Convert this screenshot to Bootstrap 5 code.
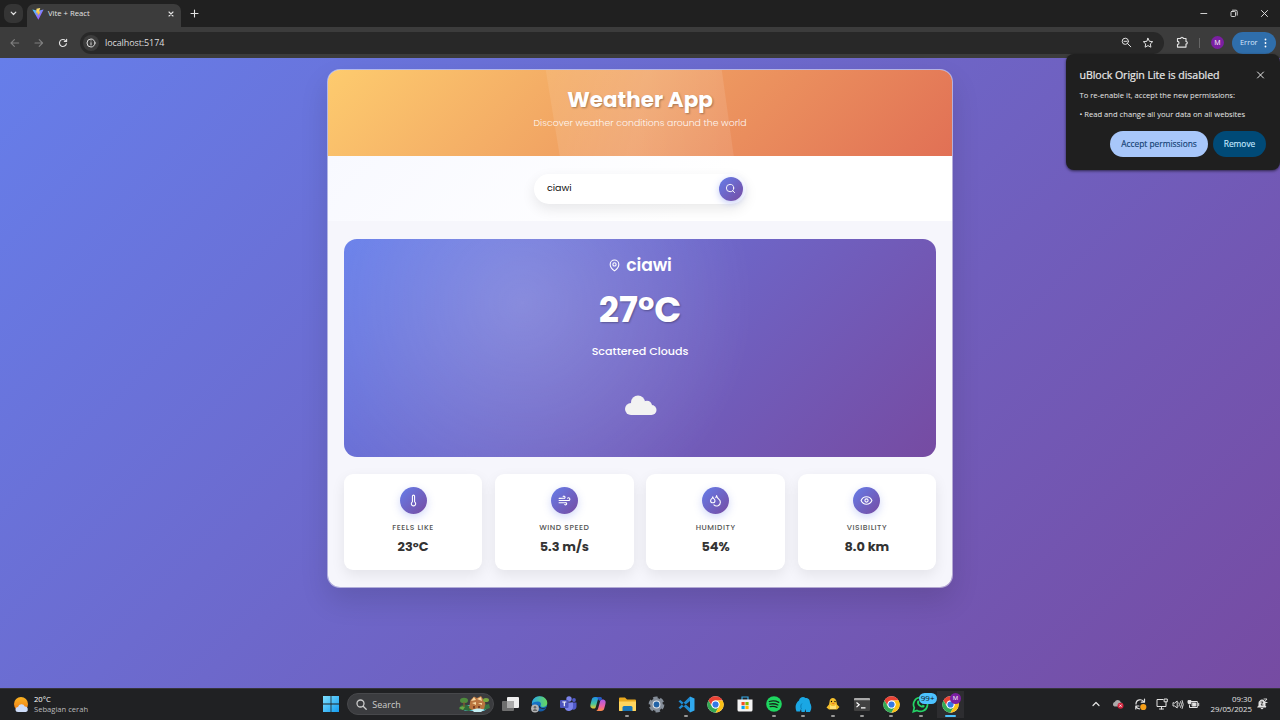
<!DOCTYPE html>
<html lang="en">
<head>
<meta charset="utf-8">
<title>Vite + React</title>
<meta name="viewport" content="width=device-width, initial-scale=1">
<link rel="stylesheet" href="https://cdn.jsdelivr.net/npm/bootstrap@5.3.0/dist/css/bootstrap.min.css">
<style>
:root{--grad:linear-gradient(135deg,#667eea 0%,#764ba2 100%)}
body{height:720px;width:1280px;overflow:hidden;font-family:"Open Sans","Noto Sans",sans-serif;font-size:8px;line-height:1;background:#202020;color:#e3e3e3;white-space:nowrap}
svg{display:block;flex:none}
.ln{fill:none;stroke:currentColor;stroke-linecap:round;stroke-linejoin:round}
/* browser chrome */
.tabstrip{height:27px;background:#202020}
.tabmenu{width:19px;height:19px;border-radius:7px;background:#353535;margin-left:4px}
.tab-active{width:154px;height:23px;margin:4px 0 0 4px;padding:0 6px 3px 5px;background:#3c3c3c;border-radius:7px 7px 0 0}
.tab-title{font-size:7.7px}
.winctl{gap:21px;padding-right:10px}
.toolbar{height:31px;background:#3c3c3c;padding:0 4px 0 9px}
.omni{width:1084px;height:22px;border-radius:11px;background:#282828;margin-left:11px;padding:0 10px 0 3px}
.siteinfo{width:16px;height:16px;border-radius:50%;background:#3c3c3c}
.url{font-size:9px;margin-left:6px;color:#ddd;letter-spacing:-.1px}
.avatar-m{width:13px;height:13px;border-radius:50%;background:#7b1fa2;font-size:7px;color:#fff}
.err{width:44px;height:22px;border-radius:11px;background:#2f6eab;color:#d7e8ff;font-size:7.4px;padding:0 9px 0 8px}
/* page */
.viewport-bg{height:630px;background:var(--grad);padding-top:11px}
.pop{font-family:Poppins,Inter,"Liberation Sans",sans-serif}
.app{width:626.500px;height:518.500px;border-radius:13px;border:1px solid rgba(255,255,255,.5);background:#f6f6fc;background-clip:padding-box;box-shadow:0 13px 28px rgba(0,0,0,.12);overflow:hidden}
.hero{height:86px;background:linear-gradient(135deg,#fdcb6e,#e17055);padding-top:16.500px;color:#fff}
.shine{inset:0;background:linear-gradient(100deg,rgba(255,255,255,.08) 34%,rgba(255,255,255,.16) 50%,rgba(255,255,255,.09) 66%);clip-path:polygon(218px 0,394px 0,406px 86px,232px 86px)}
.hero h1{font-size:21.500px;line-height:26px;font-weight:700;text-shadow:1px 1px 2px rgba(0,0,0,.3)}
.hero p{font-size:9.350px;line-height:14px;margin-top:3px;font-weight:300;opacity:.9}
.findbar{height:65px;background:linear-gradient(135deg,#f8f9ff,#fff 60%);padding-top:18px}
.pill{width:212px;height:30px;border-radius:15px;background:#fff;box-shadow:0 5px 14px rgba(0,0,0,.09);padding:0 3px 2px 13px;color:#111;font-size:9.500px}
.gobtn{width:24px;height:24px;border-radius:50%;background:var(--grad);color:#fff;box-shadow:0 2px 7px rgba(102,126,234,.4);margin-top:2px;padding:0 1px 1px 0}
.now{height:218px;border-radius:13px;margin:18px 16px 0;background:radial-gradient(circle 230px at 178px 64px,rgba(255,255,255,.2),rgba(255,255,255,0)),var(--grad);color:#fff;padding-top:15px}
.city{font-size:17.200px;line-height:22px;font-weight:600;letter-spacing:-.1px}
.temp{font-size:35.400px;line-height:44px;font-weight:700;margin-top:12px;text-shadow:1px 1px 2px rgba(0,0,0,.3)}
.desc{font-size:11.100px;line-height:16px;font-weight:500;margin-top:11px}
.stats{gap:12.600px;margin:17px 16px 0}
.stat{height:96px;border-radius:9px;background:#fff;box-shadow:0 5px 14px rgba(0,0,0,.08);padding-top:13px;color:#333}
.orb{width:27px;height:27px;border-radius:50%;background:var(--grad);color:#fff;box-shadow:0 3px 8px rgba(102,126,234,.3)}
.lab{font-size:7.600px;line-height:10px;font-weight:500;color:#555;letter-spacing:.55px;margin-top:8.500px}
.val{font-size:12.900px;line-height:17px;font-weight:700;margin-top:5.500px}
/* extension popup */
.extpop{top:54px;right:0;width:214px;height:116px;border-radius:8px;background:#1f1f1f;box-shadow:0 1px 3px rgba(0,0,0,.6);padding:14px 15px 0 13.500px;color:#e8e8e8}
.extpop h2{font-size:10.600px;line-height:15px;font-weight:500;letter-spacing:-.05px;-webkit-text-stroke:.2px}
.extpop .txt{font-size:7.600px;line-height:11px}
.extbtn{height:26px;border-radius:13px;font-size:8.400px;font-weight:500;-webkit-text-stroke:.15px}
/* taskbar */
.taskbar{height:32px;background:#202123;border-top:1px solid #36343c;padding-bottom:1px}
.widget{width:316px;padding-left:13px;font-size:7.600px}
.tb{width:29.350px;height:31px;position:relative}
.tb::after{content:"";position:absolute;bottom:3px;width:4px;height:2px;border-radius:1px;background:transparent}
.tb.run::after{background:#999}
.tb.on::after{background:#4cc2ff;width:11px}
.tb.on{background:linear-gradient(#2d2d30,#2d2d30) center/27px 27px no-repeat}
.searchbox{width:147px;height:22px;border-radius:11px;background:#3b3c3f;border:1px solid #47484b;margin:0 1px 0 2px;padding:0 3px 0 8px;color:#ccc;font-size:9px}
.cnt{top:4px;right:-1px;height:11px;border-radius:6px;background:#4cc2ff;color:#111;font-size:8px;padding:1.500px 2px 0;z-index:1}
.mbadge{top:4px;right:4px;width:11px;height:11px;border-radius:50%;background:#7b1fa2;color:#fff;font-size:6px}
.clock{font-size:7.800px;line-height:10.500px;width:52px}
</style>
</head>
<body class="d-flex flex-column position-relative">
<svg width="0" height="0" class="position-absolute"><defs>
<symbol id="chrome" viewBox="0 0 48 48"><circle cx="24" cy="24" r="23" fill="#fff"/><path d="M4 12.500A23 23 0 0 1 44 12.500H24A11.500 11.500 0 0 0 14 29.800z" fill="#ea4335"/><path d="M4 12.500A23 23 0 0 0 24 47L34 29.800A11.500 11.500 0 0 1 14 29.800z" fill="#34a853"/><path d="M44 12.500A23 23 0 0 1 24 47L34 29.800A11.500 11.500 0 0 0 24 12.500z" fill="#fbc116"/><circle cx="24" cy="24" r="11" fill="#fff"/><circle cx="24" cy="24" r="8.700" fill="#3478e5"/></symbol>
</defs></svg>

<header class="tabstrip d-flex align-items-center flex-shrink-0">
  <div class="tabmenu d-flex align-items-center justify-content-center"><svg class="ln" width="7" height="5" viewBox="0 0 7 5" stroke-width="1.200"><path d="M1.200 1.200 3.500 3.500 5.800 1.200"/></svg></div>
  <div class="tab-active d-flex align-items-center">
    <svg width="12" height="12" viewBox="0 0 32 32"><defs><linearGradient id="va" x2="1" y2="1"><stop stop-color="#41d1ff"/><stop offset="1" stop-color="#bd34fe"/></linearGradient><linearGradient id="vb" x2="0" y2="1"><stop stop-color="#ffea83"/><stop offset="1" stop-color="#ffa800"/></linearGradient></defs><path d="M31 4 17 31 1 4l15 3z" fill="url(#va)"/><path d="M22 0 12 2l-.7 11 4-1-1 5 3-.8-.8 5 6-12-4 .8z" fill="url(#vb)"/></svg>
    <span class="tab-title ms-1">Vite + React</span>
    <svg class="ln ms-auto" width="8" height="8" viewBox="0 0 8 8" stroke-width="1.100"><path d="m2 2 4 4M6 2 2 6"/></svg>
  </div>
  <svg class="ln" style="margin-left:9px" width="9" height="9" viewBox="0 0 9 9" stroke-width="1.100"><path d="M4.500 1v7M1 4.500h7"/></svg>
  <div class="winctl d-flex align-items-center ms-auto">
    <svg class="ln" width="9" height="9" viewBox="0 0 9 9" stroke-width=".9"><path d="M.8 4.500h6"/></svg>
    <svg class="ln" width="9" height="9" viewBox="0 0 9 9" stroke-width=".9"><rect x="1" y="2.500" width="4.500" height="5" rx=".8"/><path d="M2.500 1.200H6a1.200 1.200 0 0 1 1.200 1.200v3.800"/></svg>
    <svg class="ln" width="10" height="9" viewBox="0 0 10 9" stroke-width=".95"><path d="m1.500 1.500 6 6m0-6-6 6"/></svg>
  </div>
</header>

<div class="toolbar d-flex align-items-center flex-shrink-0">
  <svg class="ln" style="color:#7f7f7f" width="12" height="12" viewBox="0 0 12 12" stroke-width="1.100"><path d="M9.700 6H2.200M5.400 2.600 2 6l3.400 3.400"/></svg>
  <svg class="ln" style="color:#7f7f7f;margin-left:12px" width="12" height="12" viewBox="0 0 12 12" stroke-width="1.100"><path d="M2 6h7.500M6.200 2.600 9.600 6 6.200 9.400"/></svg>
  <svg class="ln" style="margin-left:12px" width="12" height="12" viewBox="0 0 12 12" stroke-width="1.150"><path d="M9.400 6.700A3.500 3.500 0 1 1 8.500 3.600l.9.800M9.600 2.200v2.300H7.300"/></svg>
  <div class="omni d-flex align-items-center">
    <div class="siteinfo d-flex align-items-center justify-content-center"><svg class="ln" width="10" height="10" viewBox="0 0 10 10" stroke-width=".95"><circle cx="5" cy="5" r="4"/><path d="M5 4.700v2.300M5 2.900v.1"/></svg></div>
    <span class="url">localhost:5174</span>
    <svg class="ln ms-auto" width="11" height="11" viewBox="0 0 11 11" stroke-width="1"><circle cx="4.300" cy="4.300" r="3.100"/><path d="m6.600 6.600 3.200 3.200M3 4.300h2.600"/></svg>
    <svg class="ln" style="margin-left:10px" width="12" height="12" viewBox="0 0 12 12" stroke-width="1"><path d="m6 1.300 1.400 3 3.300.4-2.400 2.200.6 3.300L6 8.600l-2.900 1.600.6-3.300L1.300 4.700l3.300-.4z"/></svg>
  </div>
  <svg class="ln" style="margin-left:12px" width="13" height="13" viewBox="0 0 13 13" stroke-width="1.150"><path d="M1.500 2.500h3.200a1.300 1.300 0 0 1 2.600 0h2.700v3a1.300 1.300 0 0 1 0 2.600v3H1.500V8.400a1.500 1.500 0 0 0 0-3z"/></svg>
  <span style="width:1px;height:10px;background:#666;margin-left:10px"></span>
  <span class="avatar-m d-flex align-items-center justify-content-center" style="margin-left:11px">M</span>
  <span class="err d-flex align-items-center justify-content-between ms-auto"><span>Error</span><svg width="3" height="10" viewBox="0 0 3 10" fill="#fff"><circle cx="1.500" cy="1.500" r=".9"/><circle cx="1.500" cy="5" r=".9"/><circle cx="1.500" cy="8.500" r=".9"/></svg></span>
</div>

<main class="viewport-bg pop flex-shrink-0">
  <div class="app mx-auto">
    <div class="hero position-relative text-center">
      <div class="shine position-absolute"></div>
      <h1 class="m-0 position-relative">Weather App</h1>
      <p class="mb-0 position-relative">Discover weather conditions around the world</p>
    </div>
    <div class="findbar">
      <div class="pill mx-auto d-flex align-items-center justify-content-between"><span>ciawi</span>
        <span class="gobtn d-flex align-items-center justify-content-center"><svg class="ln" width="11" height="11" viewBox="0 0 24 24" stroke-width="2"><circle cx="11" cy="11" r="8"/><path d="m21 21-4.300-4.300"/></svg></span></div>
    </div>
    <div class="now d-flex flex-column align-items-center">
      <div class="city d-flex align-items-center"><svg class="ln" style="margin-right:5px" width="13" height="13" viewBox="0 0 24 24" stroke-width="2"><path d="M20 10c0 6-8 12-8 12s-8-6-8-12a8 8 0 0 1 16 0Z"/><circle cx="12" cy="10" r="3"/></svg><span>ciawi</span></div>
      <div class="temp">27°C</div>
      <div class="desc">Scattered Clouds</div>
      <svg style="margin:36px 0 0 1px" width="32" height="21" viewBox="0 0 32 21" fill="#f2f2f2"><circle cx="6" cy="14" r="6"/><circle cx="13" cy="7.500" r="7"/><circle cx="22" cy="10.500" r="4.800"/><circle cx="26.500" cy="15" r="5"/><rect x="6" y="9" width="20.500" height="11"/></svg>
    </div>
    <div class="stats d-flex">
      <div class="stat flex-fill w-25 d-flex flex-column align-items-center"><span class="orb d-flex align-items-center justify-content-center"><svg class="ln" width="13" height="13" viewBox="0 0 24 24" stroke-width="2"><path d="M14 4v10.500a4 4 0 1 1-4 0V4a2 2 0 0 1 4 0Z"/></svg></span><span class="lab">FEELS LIKE</span><span class="val">23°C</span></div>
      <div class="stat flex-fill w-25 d-flex flex-column align-items-center"><span class="orb d-flex align-items-center justify-content-center"><svg class="ln" width="13" height="13" viewBox="0 0 24 24" stroke-width="2"><path d="M17.700 7.700a2.500 2.500 0 1 1 1.800 4.300H2M9.600 4.600A2 2 0 1 1 11 8H2M12.600 19.400A2 2 0 1 0 14 16H2"/></svg></span><span class="lab">WIND SPEED</span><span class="val">5.3 m/s</span></div>
      <div class="stat flex-fill w-25 d-flex flex-column align-items-center"><span class="orb d-flex align-items-center justify-content-center"><svg class="ln" width="13" height="13" viewBox="0 0 24 24" stroke-width="2"><path d="M7 16.300c2.200 0 4-1.830 4-4.050 0-1.160-.57-2.260-1.710-3.190S7.290 6.750 7 5.300c-.29 1.450-1.140 2.840-2.290 3.760S3 11.100 3 12.250c0 2.220 1.800 4.050 4 4.050z"/><path d="M12.560 6.600A10.970 10.970 0 0 0 14 3.020c.5 2.500 2 4.900 4 6.500s3 3.500 3 5.500a6.980 6.980 0 0 1-11.910 4.970"/></svg></span><span class="lab">HUMIDITY</span><span class="val">54%</span></div>
      <div class="stat flex-fill w-25 d-flex flex-column align-items-center"><span class="orb d-flex align-items-center justify-content-center"><svg class="ln" width="13" height="13" viewBox="0 0 24 24" stroke-width="2"><path d="M2 12s3-7 10-7 10 7 10 7-3 7-10 7-10-7-10-7Z"/><circle cx="12" cy="12" r="3"/></svg></span><span class="lab">VISIBILITY</span><span class="val">8.0 km</span></div>
    </div>
  </div>
</main>

<footer class="taskbar d-flex align-items-center flex-shrink-0">
  <div class="widget d-flex align-items-center">
    <svg width="17" height="17" viewBox="0 0 17 17"><defs><linearGradient id="sun" x2="0" y2="1"><stop stop-color="#fbb321"/><stop offset="1" stop-color="#ee7b18"/></linearGradient></defs><circle cx="8" cy="8" r="7" fill="url(#sun)"/><path d="M5 16a2.500 2.500 0 0 1 0-5 3.600 3.600 0 0 1 6.800-.6A2.900 2.900 0 0 1 13 16z" fill="#cddcf8"/></svg>
    <div style="margin-left:4px;line-height:10.500px"><div class="text-white">20°C</div><div style="color:#bbb">Sebagian cerah</div></div>
  </div>
  <div class="tb d-flex align-items-center justify-content-center"><svg width="16" height="16" viewBox="0 0 16 16"><defs><linearGradient id="wn" x2="1" y2="1"><stop stop-color="#7fe0ff"/><stop offset="1" stop-color="#139cf0"/></linearGradient></defs><path fill="url(#wn)" d="M0 0h7.600v7.600H0zM8.400 0H16v7.600H8.400zM0 8.400h7.600V16H0zM8.400 8.400H16V16H8.400z"/></svg></div>
  <div class="searchbox d-flex align-items-center">
    <svg class="ln" width="11" height="11" viewBox="0 0 11 11" stroke-width="1.300"><circle cx="4.500" cy="4.500" r="3.500"/><path d="m7.200 7.200 3 3"/></svg><span style="margin-left:5px">Search</span>
    <svg class="ms-auto" width="31" height="18" viewBox="0 0 31 18"><path d="M1 12c5-3 23-3 29 0l-5 4H6z" fill="#4fb9cf"/><path d="M0 14.500c1-5 5-6.500 10-3.500l5 3-5 2z" fill="#2f6a39"/><path d="M0 13q3-3 6-1l-2 3z" fill="#69a847"/><ellipse cx="5" cy="5.500" rx="4" ry="2.700" fill="#4e8b3d"/><path d="M5 7v5" stroke="#8a5a33" stroke-width="1.200"/><path d="m10 13 1.500-8L15 1.500l3 1.500 4-2 4 6 1 6-5 2h-9z" fill="#b9743f"/><path d="m12 6 3-4 2 3zM18 4l4-2 1 4zM13 8l4-1v3zM19 8h4v2z" fill="#f6d6a0"/><path d="M14 11h2v2.500h-2zM19 11h2v2.500h-2z" fill="#7a3e22"/><path d="M13 15c4-2 9-2 12 0l-3 2h-7z" fill="#c4eef2"/><ellipse cx="27" cy="5" rx="3" ry="2" fill="#79a93f"/><path d="m25 15 1-5 4-1 1 4z" fill="#397542"/></svg>
  </div>
  <div class="tb d-flex align-items-center justify-content-center"><svg width="17" height="15" viewBox="0 0 17 15"><rect x="5" width="12" height="11" rx="1" fill="#eee"/><rect y="4" width="12" height="10" rx="1" fill="#777" opacity=".9"/><path d="M5 4h7v7H5z" fill="#aaa"/></svg></div>
  <div class="tb d-flex align-items-center justify-content-center"><svg width="17" height="17" viewBox="0 0 17 17"><defs><linearGradient id="eg" x2="1"><stop stop-color="#2aa8e8"/><stop offset="1" stop-color="#67d95b"/></linearGradient></defs><circle cx="8.500" cy="8" r="7.700" fill="#1571c4"/><path d="M.8 8C1 3 5 .3 8.500.3c5 0 7.800 3.500 7.800 6.700 0 2.500-2 4-4.500 4-2 0-2.800-1-2-2 .7-1.200-.2-3.400-3-3.400C3.500 5.600 1.500 7 .8 8" fill="url(#eg)"/><path d="M8.500 8.500c-.5 3.500 4 4.500 7.200 2.800L17 13l-5 4H7z" fill="#202123"/><path d="M7 8c0 5 5 5.500 8.500 3.800-1.200 2.300-3.500 3.700-6 3.700-4-.5-5-5-2.500-7.500" fill="#155ca8"/><circle cx="4" cy="12.500" r="3.900" fill="#b4b4b4"/><circle cx="4" cy="11.300" r="1.300" fill="#666"/><path d="M1.800 15c.3-2.700 4.100-2.700 4.400 0" fill="#666"/></svg></div>
  <div class="tb d-flex align-items-center justify-content-center"><svg width="17" height="16" viewBox="0 0 17 16"><circle cx="9" cy="3" r="2.700" fill="#7b83eb"/><circle cx="14" cy="4" r="1.900" fill="#5059c9"/><path d="M11 6.500h5.500V11a3 3 0 0 1-5 2z" fill="#5059c9"/><path d="M5 6.500h8V11a4.200 4.200 0 0 1-8.200 1z" fill="#7b83eb"/><rect y="4" width="8.500" height="8" rx="1" fill="#4b53bc"/><path d="M2.300 6h4M4.300 6v4.200" stroke="#fff" stroke-width="1.100"/></svg></div>
  <div class="tb d-flex align-items-center justify-content-center"><svg width="16" height="16" viewBox="0 0 16 16"><defs><linearGradient id="c1" x2="0" y2="1"><stop stop-color="#1d8fe8"/><stop offset=".6" stop-color="#47c59b"/><stop offset="1" stop-color="#edc52a"/></linearGradient><linearGradient id="c2" x2="0" y2="1"><stop stop-color="#a95be8"/><stop offset=".6" stop-color="#ee62a4"/><stop offset="1" stop-color="#fb8c45"/></linearGradient></defs><path d="M5 1h5c-1.700.6-2 2-2.400 3.500L5.800 11c-.3 1-1 1.500-2 1.500C0 12.500 0 10 .7 7.500l1-3.700C2.200 2 3 1 5 1" fill="url(#c1)"/><path d="M11 15H6c1.700-.6 2-2 2.400-3.500L10.200 5c.3-1 1-1.500 2-1.500 3.800 0 3.800 2.500 3.100 5l-1 3.700C13.800 14 13 15 11 15" fill="url(#c2)"/><path d="M6 1h4.500c1 0 1.400.8 1.700 2.500-1.200 0-1.800.5-2 1.500L8.500 4C8 2 7 1 6 1" fill="#265bc5"/></svg></div>
  <div class="tb run d-flex align-items-center justify-content-center"><svg width="17" height="15" viewBox="0 0 17 15"><path d="M0 1.500Q0 .5 1 .5h5l2 2h8q1 0 1 1V14H0z" fill="#eaa91e"/><path d="M0 4.500h17V13q0 1-1 1H1q-1 0-1-1z" fill="#ffd55e"/><path d="M3.500 14V10.500q0-1.500 1.500-1.500h7q1.500 0 1.500 1.500V14z" fill="#1976b8"/></svg></div>
  <div class="tb d-flex align-items-center justify-content-center"><svg width="17" height="17" viewBox="0 0 17 17"><circle cx="8.500" cy="8.500" r="6.400" fill="#858e99"/><circle cx="8.500" cy="8.500" r="6.600" fill="none" stroke="#858e99" stroke-width="2.600" stroke-dasharray="4.400 2.510"/><circle cx="8.500" cy="8.500" r="3.900" fill="#e3e8ed"/><circle cx="8.500" cy="8.500" r="2.900" fill="#2062a6"/></svg></div>
  <div class="tb run d-flex align-items-center justify-content-center"><svg width="17" height="17" viewBox="0 0 17 17"><path d="M12 .5 16.500 2.500v12L12 16.500z" fill="#30a9ee"/><path d="M12 5 2.300 13 .5 11.700 12 .5zM12 12 2.300 4 .5 5.300 12 16.500z" fill="#1f8ad2"/></svg></div>
  <div class="tb d-flex align-items-center justify-content-center"><svg width="17" height="17"><use href="#chrome"/></svg></div>
  <div class="tb d-flex align-items-center justify-content-center"><svg width="16" height="16" viewBox="0 0 16 16"><path d="M5 4V1h6v3" fill="none" stroke="#35a9e8" stroke-width="1.200"/><path d="M.5 3.500h15V14q0 1.500-1.500 1.500H2Q.5 15.500.5 14z" fill="#f3f3f3"/><path d="M4.500 6h3.200v3.200H4.500z" fill="#f25022"/><path d="M8.400 6h3.200v3.200H8.400z" fill="#7fba00"/><path d="M4.500 9.900h3.200v3.200H4.500z" fill="#00a4ef"/><path d="M8.400 9.900h3.200v3.200H8.400z" fill="#ffb900"/></svg></div>
  <div class="tb run d-flex align-items-center justify-content-center"><svg width="16" height="16" viewBox="0 0 16 16"><circle cx="8" cy="8" r="7.800" fill="#1ed760"/><path d="M3.300 5.500q5-1.500 9.500.8M3.700 8.200q4.300-1.200 8.200.8M4.200 10.700q3.700-1 6.800.7" fill="none" stroke="#17251b" stroke-width="1.300" stroke-linecap="round"/></svg></div>
  <div class="tb run d-flex align-items-center justify-content-center"><svg width="17" height="17" viewBox="0 0 17 17"><path d="M1.500 15.500C-.3 11 .5 7 4 4.500 4.500 1 8.500 0 10.500 2c3.500-.2 4.500 2.500 4.500 5 2 3 1.500 6.500 0 9h-4l-.3-3-1 3H6.500L6 13l-1 2.500z" fill="#1aa7e4"/><path d="M6.500 13c-1-2-1-4 .5-5.500" stroke="#0872a9" fill="none" stroke-width=".8"/></svg></div>
  <div class="tb run d-flex align-items-center justify-content-center"><svg width="14" height="14" viewBox="0 0 14 14"><path d="M3.500 5c0-5.500 6.500-5.500 7 0l.5 2.500L13.500 10 11 12.500H3L.5 10.500l2.500-3z" fill="#f4bf2d"/><path d="M4 7.500c1 2 5 2 6 0V12H4z" fill="#ffe174"/><circle cx="5.500" cy="4.500" r=".7"/><circle cx="9" cy="4.500" r=".7"/><path d="m5.500 6 1.800 1.300L9 6z" fill="#eb6925"/></svg></div>
  <div class="tb run d-flex align-items-center justify-content-center"><svg width="16" height="13" viewBox="0 0 16 13"><rect width="16" height="13" rx="1" fill="#414141"/><path d="M0 1q0-1 1-1h14q1 0 1 1v1.200H0z" fill="#aaa"/><path d="m2.500 4.500 2.700 2.300-2.700 2.300M7 9.800h4.500" stroke="#fff" fill="none" stroke-width="1.200"/></svg></div>
  <div class="tb run d-flex align-items-center justify-content-center"><svg width="17" height="17"><use href="#chrome"/></svg></div>
  <div class="tb run d-flex align-items-center justify-content-center"><svg width="17" height="17" viewBox="0 0 17 17"><path d="m1.300 15.700 1-4A7 7 0 1 1 5 14.500z" fill="#202123" stroke="#24d366" stroke-width="1.700"/><path d="M5.300 5c1-1.500 1.500-.5 2.100 1l-.6 1c.8 1.500 1.700 2.200 3 2.700l1-1 2 1c-.3 2-2.300 2.200-4.300 1.300-2.400-1.100-4.200-3.500-3.200-6" fill="#24d366"/></svg><span class="cnt position-absolute">99+</span></div>
  <div class="tb on d-flex align-items-center justify-content-center"><svg width="17" height="17"><use href="#chrome"/></svg><span class="mbadge position-absolute d-flex align-items-center justify-content-center">M</span></div>
  <div class="d-flex align-items-center ms-auto" style="padding-right:12px">
    <svg class="ln" width="8" height="6" viewBox="0 0 8 6" stroke-width="1.200"><path d="m1 4.500 3-3 3 3"/></svg>
    <svg style="margin-left:12px" width="12" height="10" viewBox="0 0 12 10"><path d="M2.500 7.500a2.300 2.300 0 0 1 .2-4.400 3.300 3.300 0 0 1 6.200.4c2 .2 2 3 1 4z" fill="#aaa"/><circle cx="8.500" cy="6.700" r="3" fill="#d3233c"/><path d="m7.400 5.600 2.200 2.200m0-2.200L7.400 7.800" stroke="#fff" stroke-width=".8"/></svg>
    <svg class="ln" style="margin-left:10px" width="13" height="13" viewBox="0 0 13 13" stroke-width="1.200"><path d="M2 6a4.200 4.200 0 0 1 8-1.800M10.500 1v3.200H7.300M1.800 11V8H5M2 8.500c.8 1.500 2 2.300 3.500 2.300"/><circle cx="9.300" cy="9" r="3.100" fill="#f7a018" stroke="none"/></svg>
    <svg class="ln" style="margin-left:9px" width="12" height="12" viewBox="0 0 12 12" stroke-width="1"><path d="M7 1.500H1v7h9V6.500M3.500 11h4M5.500 8.500V11M8.500 1h2.800v2.800H8.500zM10 4v2"/></svg>
    <svg class="ln" style="margin-left:4px" width="12" height="11" viewBox="0 0 12 11" stroke-width=".95"><path d="M1 4v3h1.700L5.200 9V2L2.700 4zM7 3.800q1 1.700 0 3.400M8.700 2.600q1.800 2.900 0 5.800M10.200 1.500q2.200 4 0 8"/></svg>
    <svg class="ln" style="margin-left:3px" width="13" height="11" viewBox="0 0 13 11" stroke-width="1"><path d="M4 2.500h6.300v6H2.500V6.500M11.700 4.300v2.400"/><path d="M5.500 4h3.300v3H5.500z" fill="currentColor"/><path d="M1 2v1.500q0 1.500 1.500 1.500T4 3.500V2z" fill="currentColor"/></svg>
    <div class="clock text-end"><div>09:30</div><div>29/05/2025</div></div>
    <svg class="ln" style="margin-left:5px" width="11" height="12" viewBox="0 0 11 12" stroke-width="1"><path d="M1 9h8L8 7.500V5c0-4-6-4-6 0v2.500zM4 10.500q1 1 2 0" fill="currentColor"/><path d="M7 1h3L7 4.500h3" stroke-width=".9"/><path d="M4 4h2L4 7h2" stroke="#222" stroke-width=".8"/></svg>
  </div>
</footer>

<aside class="extpop position-absolute">
  <div class="d-flex justify-content-between align-items-center"><h2 class="m-0">uBlock Origin Lite is disabled</h2><svg class="ln" width="9" height="9" viewBox="0 0 9 9" stroke-width="1"><path d="m1.500 1 6 6m0-6-6 6"/></svg></div>
  <div class="txt" style="margin-top:7px">To re-enable it, accept the new permissions:</div>
  <div class="txt" style="margin-top:7.500px">• Read and change all your data on all websites</div>
  <div class="d-flex justify-content-end" style="margin:11.500px -1px 0 0;gap:5px"><button class="extbtn border-0 p-0" style="width:98px;background:#a8c7fa;color:#123f73">Accept permissions</button><button class="extbtn border-0 p-0" style="width:53px;background:#004a77;color:#c2e7ff">Remove</button></div>
</aside>
<script src="https://cdn.jsdelivr.net/npm/bootstrap@5.3.0/dist/js/bootstrap.bundle.min.js"></script>
</body>
</html>
